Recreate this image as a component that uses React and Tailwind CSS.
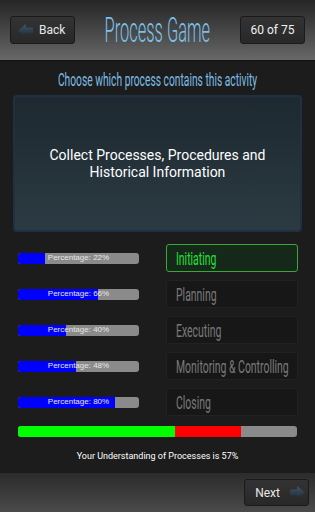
import React from 'react';

const narrow = { fontFamily: 'Roboto, "Liberation Sans", sans-serif' };

const stats = [22, 66, 40, 48, 80];
const processes = ['Initiating', 'Planning', 'Executing', 'Monitoring & Controlling', 'Closing'];

function Arrow({ dir = 'left' }) {
  const pts = dir === 'left' ? '0,6.5 8,0 8,3.5 15,3.5 15,9.5 8,9.5 8,13' : '15,6.5 7,0 7,3.5 0,3.5 0,9.5 7,9.5 7,13';
  return (
    <svg width="15" height="13" viewBox="0 0 15 13">
      <defs>
        <linearGradient id={`ag-${dir}`} x1="0" y1="0" x2="0" y2="1">
          <stop offset="0" stopColor="#43566a" />
          <stop offset="1" stopColor="#1d2832" />
        </linearGradient>
      </defs>
      <polygon points={pts} fill={`url(#ag-${dir})`} />
    </svg>
  );
}

function PercentBar({ value }) {
  return (
    <div className="relative w-[121px] h-[11px] rounded-[3px] bg-[#8a8a8a] overflow-hidden">
      <div className="h-full bg-[#0000ff]" style={{ width: `${value}%` }} />
      <div className="absolute inset-0 flex items-center justify-center text-[8px] leading-none text-[#e6e6e6]" style={{ fontFamily: '"Liberation Sans", Arial, sans-serif' }}>
        Percentage: {value}%
      </div>
    </div>
  );
}

export default function App() {
  return (
    <div className="w-[315px] h-[512px] bg-[#1c1c1c] flex flex-col overflow-hidden" style={{ fontFamily: 'Roboto, sans-serif' }}>
      {/* header */}
      <div className="h-[61px] shrink-0 flex items-center justify-between px-[10px] bg-gradient-to-b from-[#262626] to-[#686868] border-b border-[#111]">
        <button className="w-[65px] h-[28px] shrink-0 flex items-center gap-[6px] pl-[7px] bg-gradient-to-b from-[#333] to-[#282828] border border-[#1a1a1a] rounded-[3px] text-[#e8e8e8] text-[12px]">
          <Arrow dir="left" />
          <span>Back</span>
        </button>
        <div className="flex-1 flex justify-center min-w-0">
          <span className="inline-block whitespace-nowrap scale-x-[0.47] text-[#7cc2ec] text-[35px] leading-none font-light" style={narrow}>Process Game</span>
        </div>
        <div className="w-[65px] h-[28px] shrink-0 flex items-center justify-center bg-gradient-to-b from-[#333] to-[#282828] border border-[#1a1a1a] rounded-[3px] text-[#f0f0f0] text-[12px]">
          60 of 75
        </div>
      </div>

      {/* body */}
      <div className="flex-1 flex flex-col">
        <div className="h-[34px] flex items-center justify-center pt-[2px]">
          <span className="inline-block whitespace-nowrap scale-x-[0.54] text-[#7cbde6] text-[19px] leading-none" style={narrow}>
            Choose which process contains this activity
          </span>
        </div>
        <div className="mx-[13px] h-[137px] rounded-[4px] border-2 border-[#1d3142] bg-gradient-to-b from-[#1d2830] to-[#2c3b43] flex items-center justify-center text-center text-white text-[14px] leading-[17px] px-4">
          Collect Processes, Procedures and<br />Historical Information
        </div>

        <div className="mt-[12px] pl-[18px] pr-[17px] flex flex-col gap-[8px]">
          {processes.map((p, i) => (
            <div key={p} className="flex items-center justify-between h-[28px]">
              <PercentBar value={stats[i]} />
              <div
                className={
                  i === 0
                    ? 'w-[132px] h-[28px] rounded-[3px] border border-[#3aa836] bg-[#16281a] flex items-center pl-[9px] text-[#22e03c]'
                    : 'w-[132px] h-[28px] rounded-[3px] border border-[#222] bg-[#171717] flex items-center pl-[9px] text-[#7a7a7a]'
                }
              >
                <span className="inline-block whitespace-nowrap origin-left scale-x-[0.55] text-[19px] leading-none" style={narrow}>{p}</span>
              </div>
            </div>
          ))}
        </div>

        <div className="mx-[18px] mt-[10px] h-[11px] rounded-[3px] bg-[#8a8a8a] flex overflow-hidden">
          <div className="w-[157px] bg-[#00ff00]" />
          <div className="w-[66px] bg-[#ff0000]" />
        </div>
        <div className="mt-[13px] text-center text-white text-[9px]">
          Your Understanding of Processes is 57%
        </div>
      </div>

      {/* footer */}
      <div className="h-[39px] shrink-0 flex items-center justify-end pr-[6px] bg-gradient-to-b from-[#2c2c2c] to-[#4a4a4a]">
        <button className="w-[65px] h-[27px] flex items-center justify-end gap-[10px] pr-[3px] bg-gradient-to-b from-[#333] to-[#282828] border border-[#1a1a1a] rounded-[3px] text-[#e8e8e8] text-[12px]">
          <span>Next</span>
          <Arrow dir="right" />
        </button>
      </div>
    </div>
  );
}
